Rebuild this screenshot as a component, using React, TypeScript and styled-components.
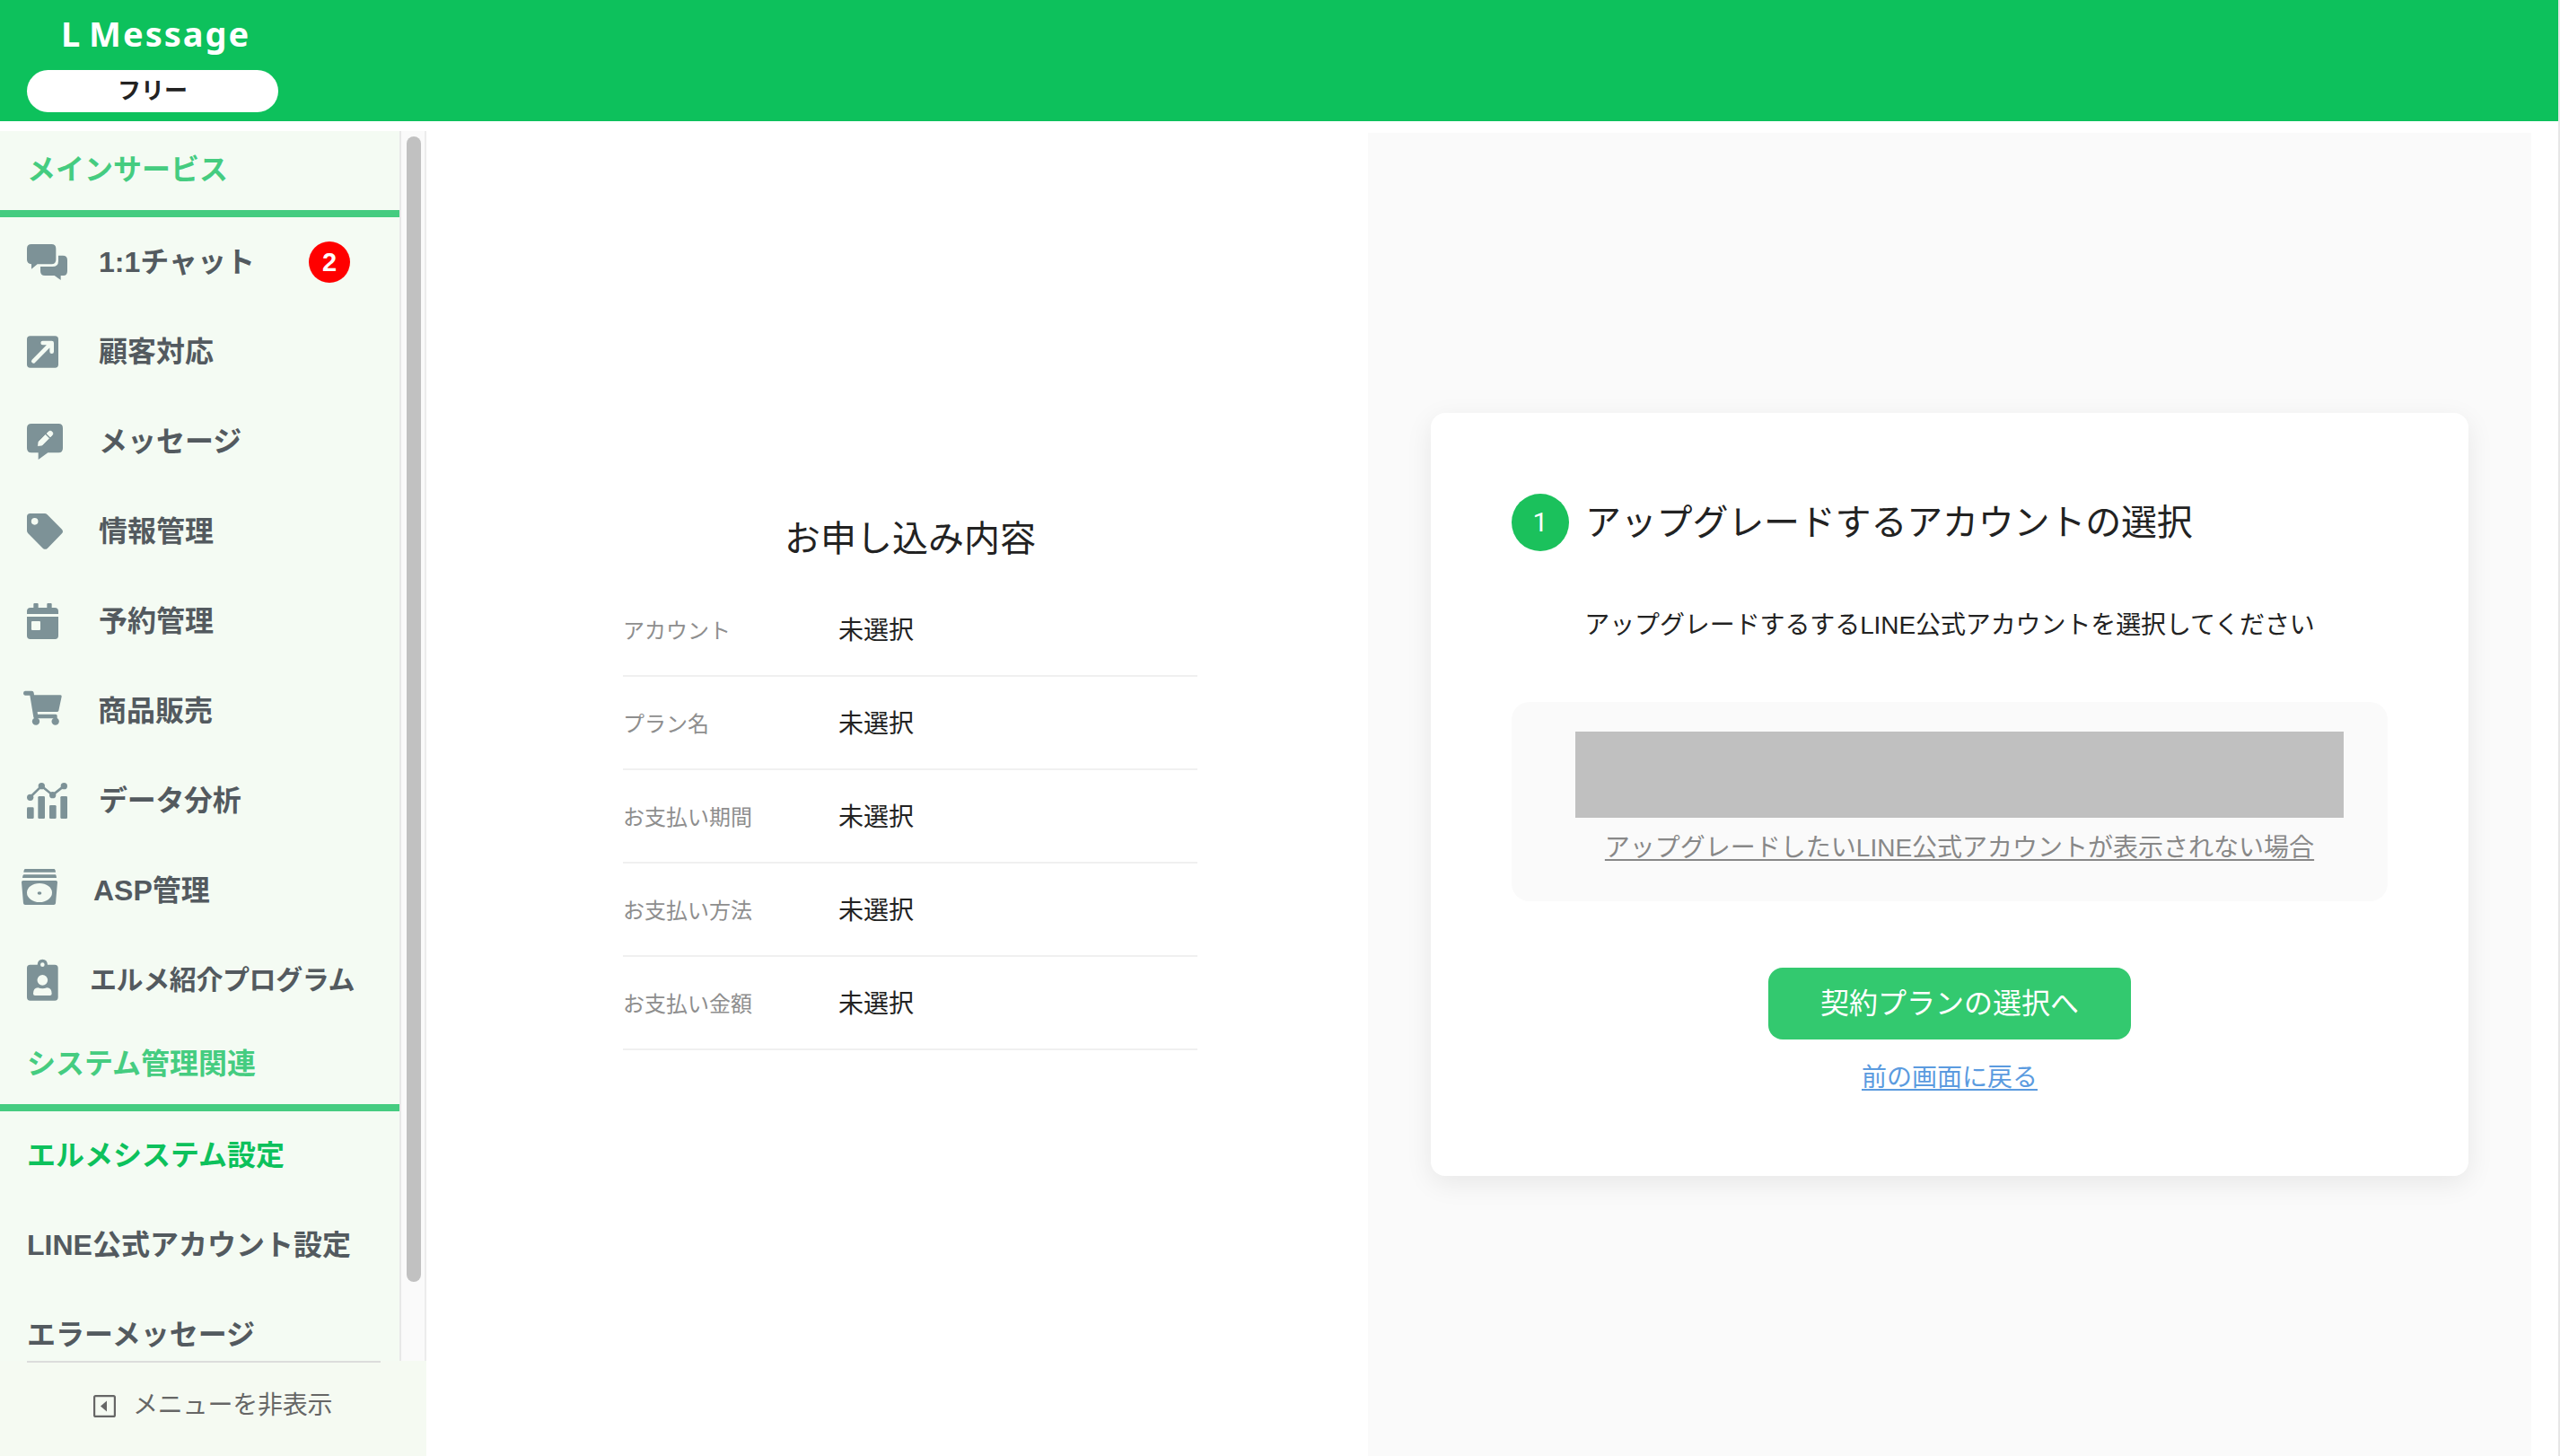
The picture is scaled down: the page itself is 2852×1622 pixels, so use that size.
import React from 'react';
import styled, { createGlobalStyle } from 'styled-components';

const GlobalStyle = createGlobalStyle`
  *, *::before, *::after { box-sizing: border-box; }
  html, body { margin: 0; padding: 0; background: #fff; }
  body {
    font-family: "Liberation Sans", "Noto Sans CJK JP", sans-serif;
    color: #222;
    overflow: hidden;
  }
`;

const Page = styled.div`
  width: 2852px;
  height: 1622px;
  display: flex;
  flex-direction: column;
  border-right: 2px solid #e7e7e7;
  background: #fff;
`;

const Header = styled.header`
  height: 135px;
  flex: none;
  background: #0dc15c;
  padding-left: 30px;
  display: flex;
  flex-direction: column;
  align-items: flex-start;
`;

const Logo = styled.div`
  height: 78px;
  padding-left: 38px;
  font-family: "Noto Sans", sans-serif;
  font-weight: 700;
  font-size: 38px;
  line-height: 74px;
  letter-spacing: 2px;
  word-spacing: -4px;
  color: #fff;
  white-space: nowrap;
`;

const PlanPill = styled.div`
  width: 280px;
  height: 47px;
  border-radius: 23.5px;
  background: #fff;
  text-align: center;
  font-weight: 700;
  font-size: 26px;
  line-height: 47px;
`;

const Body = styled.div`
  flex: 1;
  min-height: 0;
  display: flex;
`;

const Sidebar = styled.aside`
  width: 475px;
  flex: none;
  padding-top: 11px;
  display: flex;
  flex-direction: column;
`;

const MenuScroller = styled.div`
  height: 1370px;
  display: flex;
  border-right: 2px solid #ececec;
`;

const Menu = styled.nav`
  width: 445px;
  background: #f4fbf3;
  overflow: hidden;
`;

const ScrollTrack = styled.div`
  width: 28px;
  background: #fafafa;
  border-left: 2px solid #e8e8e8;
  padding: 6px 4px 0 6px;
`;

const ScrollThumb = styled.div`
  width: 16px;
  height: 1276px;
  border-radius: 8px;
  background: #c1c1c1;
`;

const SectionTitle = styled.div`
  height: 96px;
  padding-left: 30px;
  border-bottom: 8px solid #45cc80;
  font-weight: 700;
  font-size: 32px;
  line-height: 86px;
  color: #45cc80;
  white-space: nowrap;
`;

const MenuRow = styled.div`
  height: 100px;
  padding-left: 22px;
  display: flex;
  align-items: center;
`;

const MenuIcon = styled.svg`
  width: 54px;
  height: 52px;
  flex: none;
  fill: #7d9297;
`;

const MenuLabel = styled.span<{ $gap: number; $size?: number; $tracking?: number }>`
  margin-left: ${(p) => p.$gap}px;
  font-weight: 700;
  font-size: ${(p) => p.$size ?? 32}px;
  letter-spacing: ${(p) => p.$tracking ?? 0}px;
  line-height: 48px;
  color: #535a5f;
  white-space: nowrap;
`;

const UnreadBadge = styled.span`
  margin-left: auto;
  margin-right: 55px;
  width: 46px;
  height: 46px;
  border-radius: 50%;
  background: #f00;
  color: #fff;
  text-align: center;
  font-weight: 700;
  font-size: 29px;
  line-height: 46px;
`;

const SystemLink = styled.div<{ $active?: boolean }>`
  height: 100px;
  padding-left: 30px;
  font-weight: 700;
  font-size: 32px;
  line-height: 98px;
  color: ${(p) => (p.$active ? '#0dc15c' : '#535a5f')};
  white-space: nowrap;
`;

const SidebarFooter = styled.div`
  flex: 1;
  background: #f5faf2;
  padding: 0 51px 0 30px;
`;

const CollapseButton = styled.div`
  border-top: 2px solid #dcdcdc;
  height: 98px;
  padding-left: 74px;
  display: flex;
  align-items: center;
  gap: 19px;
  font-size: 28px;
  line-height: 40px;
  letter-spacing: -0.2px;
  color: #666;
  white-space: nowrap;
`;

const CollapseIcon = styled.svg`
  width: 25px;
  height: 25px;
  flex: none;
`;

const Summary = styled.section`
  width: 1049px;
  flex: none;
  padding: 435px 0 0 219px;
  display: flex;
  flex-direction: column;
`;

const SummaryTitle = styled.h2`
  margin: 0;
  width: 640px;
  height: 80px;
  font-weight: 400;
  font-size: 40px;
  line-height: 60px;
  text-align: center;
`;

const SummaryRow = styled.div`
  width: 640px;
  height: 104px;
  padding-top: 3px;
  border-bottom: 2px solid #f0f0f0;
  display: grid;
  grid-template-columns: 240px 1fr;
  align-items: center;
`;

const SummaryLabel = styled.span`
  font-size: 24px;
  line-height: 38px;
  color: #8e8e8e;
`;

const SummaryValue = styled.span`
  font-size: 28px;
  line-height: 40px;
`;

const StepPanel = styled.main`
  width: 1296px;
  margin-top: 13px;
  padding: 312px 70px 0;
  background: #fafafa;
`;

const Card = styled.div`
  height: 850px;
  padding: 90px 90px 0;
  border-radius: 16px;
  background: #fff;
  box-shadow: 0 8px 30px rgba(0, 0, 0, 0.08);
  display: flex;
  flex-direction: column;
  align-items: center;
`;

const StepHeading = styled.div`
  align-self: stretch;
  height: 64px;
  display: flex;
  align-items: center;
  gap: 18px;
`;

const StepNumber = styled.span`
  width: 64px;
  height: 64px;
  border-radius: 50%;
  background: #1bc15c;
  color: #fff;
  text-align: center;
  font-family: Roboto, sans-serif;
  font-weight: 400;
  font-size: 30px;
  line-height: 64px;
`;

const StepTitle = styled.h1`
  margin: 0;
  font-weight: 400;
  font-size: 40px;
  line-height: 60px;
  letter-spacing: -0.2px;
  white-space: nowrap;
`;

const StepDescription = styled.p`
  margin: 63px 0 0;
  height: 105px;
  font-size: 28px;
  line-height: 40px;
  letter-spacing: -0.1px;
  white-space: nowrap;
`;

const AccountBox = styled.div`
  width: 976px;
  height: 222px;
  padding: 33px 49px 0 71px;
  border-radius: 20px;
  background: #fafafa;
  display: flex;
  flex-direction: column;
  align-items: center;
`;

const AccountPlaceholder = styled.div`
  align-self: stretch;
  height: 96px;
  background: #c0c0c0;
`;

const TextLink = styled.a<{ $color: string; $top: number }>`
  margin-top: ${(p) => p.$top}px;
  font-size: 28px;
  line-height: 40px;
  color: ${(p) => p.$color};
  white-space: nowrap;
  text-decoration: underline;
  text-decoration-thickness: 2px;
  text-underline-offset: 3px;
  text-decoration-skip-ink: none;
`;

const PrimaryButton = styled.button`
  margin: 74px 0 0;
  width: 404px;
  height: 80px;
  padding: 0;
  border: 0;
  border-radius: 16px;
  background: #33c96f;
  color: #fff;
  font-family: inherit;
  font-size: 32px;
  line-height: 78px;
`;

type MenuItem = {
  label: string;
  viewTop: number;
  icon: React.ReactNode;
  gap?: number;
  size?: number;
  tracking?: number;
  badge?: string;
};

const menuItems: MenuItem[] = [
  {
    label: '1:1チャット',
    viewTop: 48,
    badge: '2',
    icon: (
      <>
        <path d="M105 66H172Q187 66 187 81V118Q187 133 172 133H125L105 149V133Q90 132 90 118V81Q90 66 105 66Z" />
        <path d="M195 104H210Q225 104 225 119V156Q225 171 212 171H203V186L182 171H150Q135 171 135 156V141H175Q195 141 195 122Z" />
      </>
    ),
  },
  {
    label: '顧客対応',
    viewTop: 348,
    icon: (
      <>
        <rect x="90" y="373" width="105" height="106" rx="11" />
        <path d="M112 457L171 397M143 396H173V425" fill="none" stroke="#f4fbf3" strokeWidth="14" strokeLinecap="round" strokeLinejoin="round" />
      </>
    ),
  },
  {
    label: 'メッセージ',
    viewTop: 648,
    icon: (
      <>
        <path d="M105 666H196Q210 666 210 681V748Q210 763 196 763H160L128 786V763H105Q90 763 90 748V681Q90 666 105 666Z" />
        <path d="M127 740L129 726L152 703L164 715L141 738ZM156 699L162 693Q168 687 174 693Q180 699 174 705L168 711Z" fill="#f4fbf3" stroke="#f4fbf3" strokeWidth="2" strokeLinejoin="round" />
      </>
    ),
  },
  {
    label: '情報管理',
    viewTop: 78,
    icon: (
      <path
        fillRule="evenodd"
        d="M101 96H149Q154 96 158 100L207 149Q213 156 207 163L159 212Q151 219 143 212L94 163Q90 159 90 154V107Q90 96 101 96ZM116 111A11.5 11.5 0 1 0 116 134A11.5 11.5 0 1 0 116 111Z"
      />
    ),
  },
  {
    label: '予約管理',
    viewTop: 378,
    icon: (
      <>
        <path d="M112 399Q112 396 115 396H125Q128 396 128 399V411H157V399Q157 396 160 396H170Q173 396 173 399V411H183Q195 411 195 423V432H90V423Q90 411 102 411H112Z" />
        <path fillRule="evenodd" d="M90 441H195V505Q195 516 184 516H101Q90 516 90 505ZM108 456Q105 456 105 459V483Q105 486 108 486H132Q135 486 135 483V459Q135 456 132 456Z" />
      </>
    ),
  },
  {
    label: '商品販売',
    viewTop: 678,
    gap: 33,
    icon: (
      <>
        <path
          fillRule="evenodd"
          d="M84 689H106Q112 689 113 695L114 703H202Q207 703 206 708L196 755Q195 759 190 759H125L126 767H186Q191 767 191 772V781H117Q113 781 112 777L100 704H84Q78 704 78 697Q78 689 84 689Z"
        />
        <circle cx="120" cy="791" r="12.5" />
        <circle cx="185" cy="791" r="12.5" />
      </>
    ),
  },
  {
    label: 'データ分析',
    viewTop: 108,
    tracking: -0.3,
    icon: (
      <>
        <rect x="90" y="208" width="23" height="38" rx="4" />
        <rect x="127" y="171" width="23" height="75" rx="4" />
        <rect x="165" y="201" width="23" height="45" rx="4" />
        <rect x="202" y="171" width="23" height="75" rx="4" />
        <path d="M101 174L139 137L176 167L214 137" fill="none" stroke="#7d9297" strokeWidth="8" />
        <circle cx="101" cy="175" r="11" />
        <circle cx="139" cy="137" r="11" />
        <circle cx="176" cy="167" r="11" />
        <circle cx="214" cy="137" r="11" />
      </>
    ),
  },
  {
    label: 'ASP管理',
    viewTop: 408,
    gap: 28,
    icon: (
      <>
        <path d="M84 414H181Q185 414 186 425H79Q80 414 84 414Z" />
        <path d="M80 433H185Q188 433 189 444H75Q76 433 80 433Z" />
        <path
          fillRule="evenodd"
          d="M77 453H187Q192 453 192 458L186 529Q185 534 180 534H84Q79 534 78 529L72 458Q72 453 77 453ZM90 493.500A42 31.500 0 1 0 174 493.500A42 31.500 0 1 0 90 493.500Z"
        />
        <ellipse cx="132" cy="495" rx="7" ry="5" />
      </>
    ),
  },
  {
    label: 'エルメ紹介プログラム',
    viewTop: 708,
    gap: 24,
    size: 30,
    tracking: -0.4,
    icon: (
      <path
        fillRule="evenodd"
        d="M101 734H125Q126 716 142 716Q158 716 159 734H183Q194 734 194 745V843Q194 854 183 854H101Q90 854 90 843V745Q90 734 101 734ZM142 727A7 7 0 1 0 142 741A7 7 0 1 0 142 727ZM142 768A17.5 17.5 0 1 0 142 803A17.5 17.5 0 1 0 142 768ZM111 831Q111 812 127 811Q142 817 157 811Q173 812 173 831Q173 837 167 837H117Q111 837 111 831Z"
      />
    ),
  },
];

const summaryRows = ['アカウント', 'プラン名', 'お支払い期間', 'お支払い方法', 'お支払い金額'];

export default function App() {
  return (
    <>
      <GlobalStyle />
      <Page>
        <Header>
          <Logo>L Message</Logo>
          <PlanPill>フリー</PlanPill>
        </Header>
        <Body>
          <Sidebar>
            <MenuScroller>
              <Menu>
                <SectionTitle>メインサービス</SectionTitle>
                {menuItems.map((item) => (
                  <MenuRow key={item.label}>
                    <MenuIcon viewBox={`66 ${item.viewTop} 162 156`}>{item.icon}</MenuIcon>
                    <MenuLabel $gap={item.gap ?? 34} $size={item.size} $tracking={item.tracking}>
                      {item.label}
                    </MenuLabel>
                    {item.badge && <UnreadBadge>{item.badge}</UnreadBadge>}
                  </MenuRow>
                ))}
                <SectionTitle>システム管理関連</SectionTitle>
                <SystemLink $active>エルメシステム設定</SystemLink>
                <SystemLink>LINE公式アカウント設定</SystemLink>
                <SystemLink>エラーメッセージ</SystemLink>
              </Menu>
              <ScrollTrack>
                <ScrollThumb />
              </ScrollTrack>
            </MenuScroller>
            <SidebarFooter>
              <CollapseButton>
                <CollapseIcon viewBox="0 0 25 25">
                  <rect x="1.1" y="1.1" width="22.8" height="22.8" rx="1.5" fill="none" stroke="#666" strokeWidth="2.2" />
                  <path d="M8 12.5L15 6.5V18.5Z" fill="#666" />
                </CollapseIcon>
                <span>メニューを非表示</span>
              </CollapseButton>
            </SidebarFooter>
          </Sidebar>
          <Summary>
            <SummaryTitle>お申し込み内容</SummaryTitle>
            {summaryRows.map((label) => (
              <SummaryRow key={label}>
                <SummaryLabel>{label}</SummaryLabel>
                <SummaryValue>未選択</SummaryValue>
              </SummaryRow>
            ))}
          </Summary>
          <StepPanel>
            <Card>
              <StepHeading>
                <StepNumber>1</StepNumber>
                <StepTitle>アップグレードするアカウントの選択</StepTitle>
              </StepHeading>
              <StepDescription>アップグレードするするLINE公式アカウントを選択してください</StepDescription>
              <AccountBox>
                <AccountPlaceholder />
                <TextLink $color="#888" $top={14}>
                  アップグレードしたいLINE公式アカウントが表示されない場合
                </TextLink>
              </AccountBox>
              <PrimaryButton>契約プランの選択へ</PrimaryButton>
              <TextLink $color="#5b9bdf" $top={23}>
                前の画面に戻る
              </TextLink>
            </Card>
          </StepPanel>
        </Body>
      </Page>
    </>
  );
}
